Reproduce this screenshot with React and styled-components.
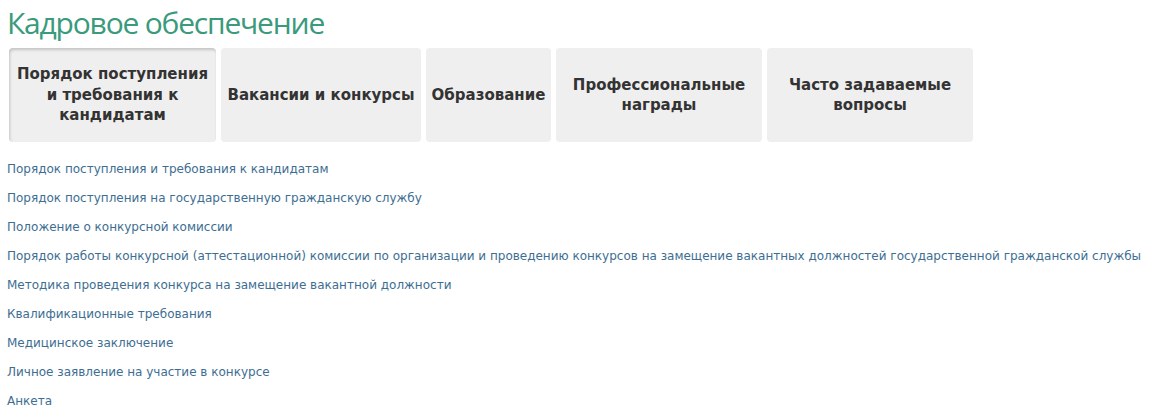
import React from 'react'
import styled, { createGlobalStyle } from 'styled-components'

const tabs = [
  { label: 'Порядок поступления и требования к кандидатам', width: 207, active: true },
  { label: 'Вакансии и конкурсы', width: 200 },
  { label: 'Образование', width: 125 },
  { label: 'Профессиональные награды', width: 206 },
  { label: 'Часто задаваемые вопросы', width: 206 },
]

const links = [
  'Порядок поступления и требования к кандидатам',
  'Порядок поступления на государственную гражданскую службу',
  'Положение о конкурсной комиссии',
  'Порядок работы конкурсной (аттестационной) комиссии по организации и проведению конкурсов на замещение вакантных должностей государственной гражданской службы',
  'Методика проведения конкурса на замещение вакантной должности',
  'Квалификационные требования',
  'Медицинское заключение',
  'Личное заявление на участие в конкурсе',
  'Анкета',
]

const App = () => (
  <>
    <GlobalStyle />
    <Page>
      <Title>Кадровое обеспечение</Title>
      <Tabs>
        {tabs.map((t) => (
          <Tab key={t.label} $active={t.active} $width={t.width}>
            {t.label}
          </Tab>
        ))}
      </Tabs>
      <LinkList>
        {links.map((l) => (
          <li key={l}>
            <DocLink href="#">{l}</DocLink>
          </li>
        ))}
      </LinkList>
    </Page>
  </>
)

export default App

const GlobalStyle = createGlobalStyle`
  body {
    margin: 0;
    background: #fff;
  }
`

const Page = styled.div`
  padding: 6px 0 0 7px;
  font-family: 'DejaVu Sans', Verdana, sans-serif;
`

const Title = styled.h1`
  margin: 0;
  font-family: 'Open Sans', sans-serif;
  font-weight: 400;
  font-size: 30px;
  letter-spacing: -1.2px;
  line-height: 34px;
  color: #3a9a7c;
`

const Tabs = styled.div`
  display: flex;
  gap: 5px;
  margin: 8px 0 0 2px;
`

const Tab = styled.div`
  width: ${(p) => p.$width}px;
  height: 94px;
  box-sizing: border-box;
  padding: 0 6px;
  display: flex;
  align-items: center;
  justify-content: center;
  text-align: center;
  background: #efefef;
  border-radius: 4px;
  font-family: 'DejaVu Sans', Verdana, sans-serif;
  font-weight: 700;
  font-size: 15px;
  line-height: 20.5px;
  color: #333;
  box-shadow: ${(p) => (p.$active ? 'inset 1px 2px 3px rgba(0,0,0,0.18)' : 'none')};
`

const LinkList = styled.ul`
  list-style: none;
  margin: 19px 0 0;
  padding: 0;
  display: flex;
  flex-direction: column;
  gap: 13px;

  li {
    display: block;
    height: 16px;
  }
`

const DocLink = styled.a`
  display: block;
  font-size: 12px;
  line-height: 16px;
  color: #3d6e92;
  text-decoration: none;
  white-space: nowrap;
`
